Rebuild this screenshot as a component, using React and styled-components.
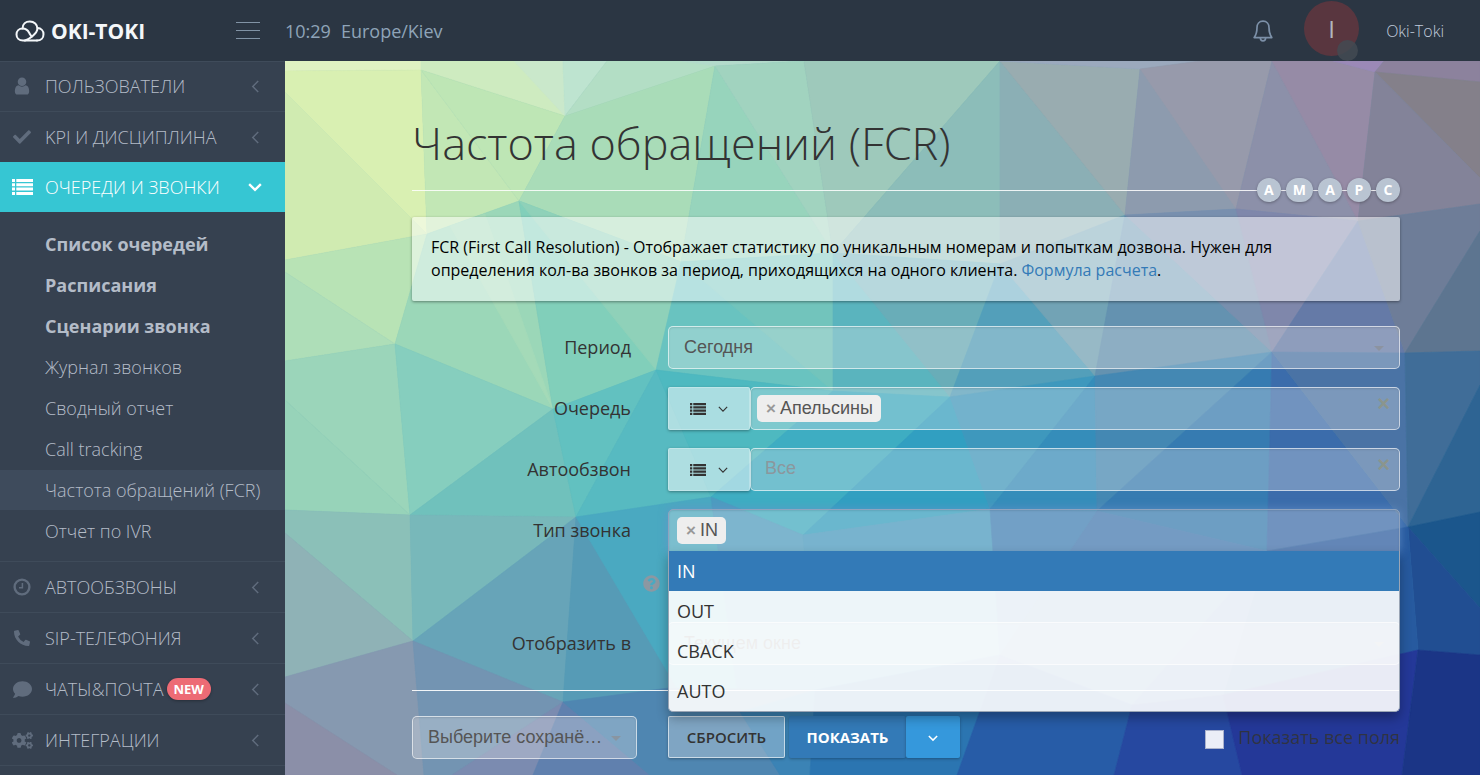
import React from 'react'
import styled, { createGlobalStyle } from 'styled-components'
import { FaCheck, FaPhoneAlt, FaComment, FaCogs, FaQuestionCircle } from 'react-icons/fa'

const GlobalStyle = createGlobalStyle`
  * {
    box-sizing: border-box;
  }
  body {
    margin: 0;
    background: #364150;
    font-family: "Open Sans", sans-serif;
    font-size: 18px;
    color: #333;
  }
  button, input, select {
    font: inherit;
    color: inherit;
  }
`

const Shell = styled.div`
  display: flex;
  flex-direction: column;
  height: 100vh;
  overflow: hidden;
`

const TopBar = styled.header`
  display: flex;
  align-items: center;
  flex: none;
  height: 61px;
  background: #2b3643;
`

const BrandArea = styled.div`
  display: flex;
  align-items: center;
  justify-content: space-between;
  width: 285px;
  padding: 0 25px 0 15px;
`

const Brand = styled.a`
  display: flex;
  align-items: center;
  gap: 6px;
  color: #f4f7f9;
  font-size: 21px;
  font-weight: 700;
  text-decoration: none;
`

const MenuToggle = styled.button`
  display: flex;
  flex-direction: column;
  gap: 7px;
  width: 24px;
  padding: 0;
  border: 0;
  background: none;
  span {
    height: 1px;
    background: #8193a5;
  }
`

const Clock = styled.div`
  display: flex;
  gap: 10px;
  flex: 1;
  color: #8fa4b8;
`

const BellButton = styled.button`
  display: flex;
  padding: 0;
  border: 0;
  background: none;
  color: #7c90a8;
`

const Avatar = styled.div`
  position: relative;
  display: flex;
  align-items: center;
  justify-content: center;
  width: 55px;
  height: 55px;
  margin: 0 27px 4px 31px;
  border-radius: 50%;
  background: #59363f;
  color: #b3b6bd;
  font-size: 24px;
`

const StatusDot = styled.span`
  position: absolute;
  right: 1px;
  bottom: -5px;
  width: 21px;
  height: 21px;
  border-radius: 50%;
  background: rgba(67, 74, 82, 0.85);
`

const UserLink = styled.a`
  margin-right: 36px;
  color: #c0cbdb;
  font-size: 16px;
  font-weight: 300;
  text-decoration: none;
`

const Body = styled.div`
  display: flex;
  flex: 1;
  min-height: 0;
`

const Sidebar = styled.nav`
  flex: none;
  width: 285px;
  overflow: hidden;
  background: #364150;
  box-shadow: inset 0 1px #3f4b5a;
`

const MenuItem = styled.a`
  box-sizing: content-box;
  display: flex;
  align-items: center;
  height: 50px;
  padding: 0 23px 0 11px;
  border-top: ${props => props.$active ? '0' : '1px solid #3f4b5a'};
  background: ${props => props.$active ? '#36c6d3' : 'transparent'};
  color: ${props => props.$active ? '#fff' : '#b4bcc8'};
  font-weight: 300;
  text-decoration: none;
  &:first-child {
    border-top: 0;
  }
`

const MenuIcon = styled.span`
  display: flex;
  justify-content: center;
  width: 22px;
  margin-right: 12px;
  color: ${props => props.$active ? '#fff' : '#606c7d'};
`

const MenuLabel = styled.span`
  display: flex;
  align-items: center;
  gap: 3px;
  flex: 1;
`

const MenuArrow = styled.span`
  display: flex;
  color: ${props => props.$active ? '#fff' : '#606c7d'};
`

const NewBadge = styled.span`
  padding: 0 7px;
  border-radius: 11px;
  background: #ed6b75;
  color: #fff;
  font-size: 13px;
  font-weight: 700;
  line-height: 22px;
  box-shadow: 0 1px 3px rgba(0, 0, 0, 0.3);
`

const SubMenu = styled.div`
  display: flex;
  flex-direction: column;
  gap: 1px;
  padding: 12px 0 10px;
`

const SubLink = styled.a`
  padding-left: 45px;
  background: ${props => props.$selected ? '#3e4b5c' : 'transparent'};
  color: #b4bcc8;
  font-weight: ${props => props.$strong ? 700 : 300};
  line-height: 40px;
  text-decoration: none;
`

const Content = styled.main`
  position: relative;
  flex: 1;
  min-width: 0;
  overflow: hidden;
  background: #5a9fb8;
`

const Backdrop = styled.svg`
  position: absolute;
  top: 0;
  left: 0;
  width: 100%;
  height: 100%;
`

const Page = styled.div`
  position: relative;
  padding: 52px 80px 0 127px;
`

const Title = styled.h1`
  margin: 0;
  font-size: 45px;
  font-weight: 300;
  line-height: 60px;
`

const TagLine = styled.div`
  display: flex;
  justify-content: flex-end;
  gap: 5px;
  margin: 5px 0 15px;
  background: linear-gradient(rgba(255, 255, 255, 0.85), rgba(255, 255, 255, 0.85)) center / 100% 1px no-repeat;
`

const Tag = styled.button`
  min-width: 24px;
  height: 24px;
  padding: 0 7px;
  border: 0;
  border-radius: 12px;
  background: #b9c4d2;
  color: #fff;
  font-size: 14px;
  font-weight: 700;
  line-height: 24px;
  box-shadow: 0 1px 3px rgba(0, 0, 0, 0.3);
`

const Notice = styled.p`
  margin: 0 0 25px;
  padding: 19px 60px 19px 19px;
  border-radius: 2px;
  background: rgba(255, 255, 255, 0.52);
  color: #000;
  font-size: 16px;
  line-height: 23px;
  box-shadow: 0 1px 3px rgba(0, 0, 0, 0.4);
  a {
    color: #337ab7;
    text-decoration: none;
  }
`

const Row = styled.div`
  display: grid;
  grid-template-columns: 256px minmax(0, 1fr);
  margin-bottom: 18px;
`

const Label = styled.label`
  padding-right: 37px;
  line-height: 43px;
  text-align: right;
`

const HelpCell = styled.div`
  display: flex;
  justify-content: flex-end;
  height: 34px;
  padding: 5px 8px 0 0;
  color: #8c98a2;
`

const Group = styled.div`
  position: relative;
  display: flex;
  min-width: 0;
`

const Picker = styled.div`
  position: relative;
  flex: 1;
  display: flex;
  align-items: center;
  min-width: 0;
  height: 43px;
  padding-left: ${props => props.$tight ? '8px' : '6px'};
  border: 1px solid ${props => props.$open ? '#8fa3bf' : 'rgba(255, 255, 255, 0.6)'};
  border-radius: ${props => props.$open ? '5px 5px 0 0' : '5px'};
  background: rgba(238, 238, 238, 0.3);
  color: #555;
  font-family: "Liberation Sans", Arial, sans-serif;
  box-shadow: inset 0 1px 2px rgba(0, 0, 0, 0.1)${props => props.$open ? ', 0 0 10px rgba(102, 145, 200, 0.7)' : ''};
`

const NativeSelect = styled.select`
  width: 100%;
  height: 100%;
  padding: 0 28px 2px 9px;
  border: 0;
  background: transparent;
  appearance: none;
  text-overflow: ellipsis;
`

const Caret = styled.span`
  position: absolute;
  top: 19px;
  right: 15px;
  border: 5px solid transparent;
  border-top-color: #8c9199;
  border-bottom: 0;
  opacity: 0.8;
  pointer-events: none;
`

const QuietInput = styled.input`
  flex: 1;
  min-width: 0;
  height: 100%;
  padding: 0 8px 2px;
  border: 0;
  outline: 0;
  background: transparent;
  &::placeholder {
    color: #8b979d;
    opacity: 1;
  }
`

const Chip = styled.span`
  display: flex;
  align-items: center;
  gap: 4px;
  height: 27px;
  margin-bottom: 1px;
  padding: 0 8px 0 9px;
  border-radius: 5px;
  background: #eee;
  line-height: 27px;
`

const ChipRemove = styled.button`
  padding: 0;
  border: 0;
  background: none;
  color: #999;
  font-size: 17px;
  font-weight: 700;
`

const ClearButton = styled.button`
  align-self: flex-start;
  margin: 4px 9px 0 0;
  padding: 0;
  border: 0;
  background: none;
  color: rgba(150, 148, 110, 0.6);
  font-size: 22px;
  font-weight: 700;
  line-height: 24px;
`

const ListButton = styled.button`
  display: flex;
  align-items: center;
  justify-content: center;
  gap: 12px;
  width: 82px;
  padding: 0;
  border: 1px solid rgba(255, 255, 255, 0.25);
  border-radius: 2px;
  background: rgba(255, 255, 255, 0.52);
  box-shadow: 0 1px 3px rgba(0, 0, 0, 0.35);
`

const Options = styled.ul`
  position: absolute;
  z-index: 2;
  top: 42px;
  left: 0;
  right: 0;
  margin: 0;
  padding: 0;
  border: 1px solid #9aa5b5;
  border-top: 0;
  border-radius: 0 0 5px 5px;
  background: rgba(255, 255, 255, 0.9);
  list-style: none;
  box-shadow: 0 6px 12px rgba(0, 0, 0, 0.3);
`

const Option = styled.li`
  padding: 0 8px;
  background: ${props => props.$current ? '#337ab7' : 'transparent'};
  color: ${props => props.$current ? '#fff' : '#333'};
  line-height: 40px;
`

const Rule = styled.hr`
  height: 1px;
  margin: 25px 0;
  border: 0;
  background: rgba(255, 255, 255, 0.9);
`

const Footer = styled.div`
  display: grid;
  grid-template-columns: 256px auto 1fr;
`

const Saved = styled.div`
  display: flex;
  width: 225px;
`

const Actions = styled.div`
  display: flex;
  height: 42px;
`

const ActionButton = styled.button`
  width: ${props => props.$narrow ? '54px' : '117px'};
  padding: 0;
  border: ${props => props.$ghost ? '1px solid rgba(255, 255, 255, 0.6)' : '0'};
  border-radius: 2px;
  margin-right: ${props => props.$ghost ? '4px' : '0'};
  background: ${props => props.$ghost ? 'rgba(238, 238, 238, 0.3)' : props.$narrow ? '#3598dc' : '#337ab7'};
  color: ${props => props.$ghost ? '#333' : '#fff'};
  font-size: 15px;
  font-weight: ${props => props.$ghost ? 600 : 700};
  box-shadow: 0 1px 3px rgba(0, 0, 0, 0.3);
`

const ShowAll = styled.label`
  display: flex;
  align-items: center;
  justify-self: end;
  gap: 14px;
  height: 42px;
  color: rgba(51, 51, 51, 0.85);
`

const CheckBox = styled.input`
  width: 19px;
  height: 19px;
  margin: 4px 0 0;
  border: 1px solid #aab2cc;
  background: #ebeef7;
  appearance: none;
`

// low-poly background: colour, then the corners of the face
const FACES = [
  ['#e0f2c2', '285,61 421,61 421,70 285,71'],
  ['#d9f0b2', '285,71 421,70 427,234 285,92'],
  ['#d0ebb1', '285,92 427,234 285,260'],
  ['#ceebc0', '421,61 563,61 565,116 421,70'],
  ['#cae8cb', '514,61 563,61 565,116'],
  ['#bee4d0', '563,61 607,61 565,116'],
  ['#b3dec5', '607,61 720,61 715,66 565,116'],
  ['#b3dacb', '682,61 804,61 715,66'],
  ['#c2e7b5', '421,70 519,201 427,234'],
  ['#bee6b5', '421,70 565,116 519,201'],
  ['#a9dcb8', '565,116 715,66 681,262 519,201'],
  ['#97d4bc', '715,66 833,253 681,262'],
  ['#a1d3bf', '715,66 804,61 833,253'],
  ['#9ec9bb', '804,61 1000,61 833,253'],
  ['#8cbdb9', '1000,61 1000,264 833,253'],
  ['#8bafb5', '1000,61 1125,215 1000,264'],
  ['#99acb0', '1000,61 1140,69 1125,215'],
  ['#9ba9bd', '1000,61 1200,61 1140,69'],
  ['#8d9bae', '1140,69 1236,209 1125,215'],
  ['#979aab', '1140,69 1200,61 1272,61 1236,209'],
  ['#8c90a9', '1272,61 1358,221 1236,209'],
  ['#968ba6', '1272,61 1333,61 1375,72 1358,221'],
  ['#9b89b7', '1333,61 1384,61 1375,72'],
  ['#8c829d', '1384,61 1480,61 1480,82 1375,72'],
  ['#84808a', '1375,72 1480,82 1480,178'],
  ['#838399', '1375,72 1480,178 1480,204 1358,221'],
  ['#b8e3b5', '285,260 427,234 395,344 285,272'],
  ['#aedeb8', '285,272 395,344 285,361'],
  ['#9bd7b8', '427,234 519,201 553,409 395,344'],
  ['#a4dab8', '450,226 485,214 553,409'],
  ['#81cfba', '519,201 681,262 656,370 553,409'],
  ['#8fd1b9', '519,201 681,262 656,370'],
  ['#69c3c0', '681,262 833,253 833,391 656,370'],
  ['#72c4bc', '681,262 833,253 833,391'],
  ['#5ab4be', '833,253 1000,264 950,397 833,391'],
  ['#69adb8', '833,253 1000,264 950,397'],
  ['#539fba', '1000,264 1095,376 950,397'],
  ['#72a3b5', '1000,264 1125,215 1095,376'],
  ['#6492b0', '1125,215 1272,352 1095,376'],
  ['#788fae', '1125,215 1236,209 1272,352'],
  ['#7f87ab', '1236,209 1358,221 1272,352'],
  ['#657aa7', '1358,221 1405,353 1272,352'],
  ['#6e7d98', '1358,221 1480,204 1480,231 1405,353'],
  ['#5d7590', '1480,231 1480,351 1405,353'],
  ['#9bd5ba', '285,361 395,344 410,515 285,400'],
  ['#97d3b9', '285,400 410,515 285,510'],
  ['#86cebe', '395,344 553,409 410,515'],
  ['#70c1bc', '553,409 576,517 410,515'],
  ['#62c1c0', '553,409 656,370 576,517'],
  ['#57bac1', '656,370 711,497 576,517'],
  ['#4eb9c0', '656,370 833,391 711,497'],
  ['#3eadc2', '833,391 950,397 803,535 711,497'],
  ['#319fc1', '950,397 990,509 803,535'],
  ['#3e98bd', '950,397 1095,376 990,509'],
  ['#358dba', '1095,376 1097,511 990,509'],
  ['#4488b3', '1095,376 1272,352 1097,511'],
  ['#367bb1', '1272,352 1267,551 1097,511'],
  ['#3b6cab', '1272,352 1408,527 1267,551'],
  ['#4a73a5', '1272,352 1405,353 1408,527'],
  ['#406d98', '1405,353 1480,351 1480,385 1408,527'],
  ['#2e6493', '1480,385 1480,512 1408,527'],
  ['#1b568c', '1408,527 1480,512 1480,608'],
  ['#214e92', '1408,527 1480,608 1480,655 1418,650'],
  ['#275a9f', '1408,527 1418,650 1223,695 1267,551'],
  ['#8bc0b8', '285,510 410,515 413,641 285,533'],
  ['#8fb2b6', '285,533 413,641 285,677'],
  ['#78b8ba', '410,515 576,517 413,641'],
  ['#67a4b8', '576,517 563,702 413,641'],
  ['#569bb6', '576,517 684,700 563,702'],
  ['#4aa9c1', '576,517 711,497 740,712 684,700'],
  ['#4c9cc0', '711,497 803,535 815,690 740,712'],
  ['#459ac0', '803,535 990,509 1000,655 815,690'],
  ['#3d7fb5', '990,509 1097,511 1000,655'],
  ['#3f77b0', '1097,511 1267,551 1132,705 1000,655'],
  ['#3a69a9', '1267,551 1223,695 1132,705'],
  ['#8699b0', '285,677 413,641 424,775 397,775 285,703'],
  ['#8b8fa8', '285,703 397,775 285,775'],
  ['#7394b2', '413,641 563,702 452,775 424,775'],
  ['#7b8bb0', '563,702 533,775 452,775'],
  ['#6080ae', '563,702 650,775 533,775'],
  ['#4f86b1', '563,702 668,688 815,690 810,775 650,775'],
  ['#3b83b5', '740,712 815,690 810,775 780,775'],
  ['#2b75b1', '815,690 1000,655 957,775 810,775'],
  ['#275ca7', '1000,655 1132,705 1114,775 957,775'],
  ['#2648a0', '1132,705 1223,695 1242,775 1114,775'],
  ['#243898', '1223,695 1418,650 1402,775 1242,775'],
  ['#1b3586', '1418,650 1480,655 1480,775 1402,775']
]

const Mesh = () => <Backdrop viewBox="285 61 1195 714" preserveAspectRatio="xMidYMin slice" aria-hidden="true">
  {FACES.map(([color, points]) => <polygon key={points} points={points} fill={color} stroke={color} strokeWidth="0.6" />)}
</Backdrop>

const CloudLogo = () => <svg width="30" height="22" viewBox="0 0 30 22" fill="none" stroke="#f4f7f9" strokeWidth="2" strokeLinecap="round">
  <path d="M22 20.5H8C4 20.5 1.5 17.800 1.5 14.400C1.5 11 4 8.400 7.600 8.400C10.500 8.400 12.600 9.600 14 12.500C15.200 15 16.400 16.200 16.800 16.600" />
  <path d="M7.600 8.400C7.600 4 10.800 1.500 14.800 1.500C19.200 1.500 22.400 4.600 22.400 8.600C22.400 12.600 19.200 14.600 16.600 16.800C14.600 18.600 13 20 10 20.500" />
  <path d="M22.600 8C26 8.200 28.500 10.600 28.500 14.200C28.500 18 26 20.500 22 20.500" />
</svg>

const BellIcon = () => <svg width="20" height="22" viewBox="0 0 20 22" fill="none" stroke="currentColor" strokeWidth="1.7" strokeLinejoin="round">
  <path d="M10 1.200C6.200 1.200 4 4 4 7.600C4 12.800 3.400 14.600 1.200 17.600H18.800C16.600 14.600 16 12.800 16 7.600C16 4 13.800 1.200 10 1.200Z" />
  <path d="M7.400 18C7.400 19.800 8.600 20.800 10 20.800C11.400 20.800 12.600 19.800 12.600 18" />
</svg>

const UserIcon = () => <svg width="20" height="20" viewBox="0 0 1792 1792" fill="currentColor">
  <path d="M1536 1399q0 109-62.500 187t-150.500 78h-854q-88 0-150.500-78t-62.500-187q0-85 8.500-160.500t31.500-152 58.500-131 94-89 134.500-34.500q131 128 313 128t313-128q76 0 134.500 34.500t94 89 58.500 131 31.500 152 8.500 160.500zm-256-887q0 159-112.500 271.500t-271.500 112.500-271.500-112.500-112.500-271.500 112.500-271.500 271.500-112.500 271.500 112.500 112.500 271.500z" />
</svg>

const ListIcon = ({ width = 16, height = 12 }) => <svg width={width} height={height} viewBox="0 0 21 16" preserveAspectRatio="none" fill="currentColor">
  {[0, 4.3, 8.6, 12.9].map(y => <path key={y} d={`M0 ${y}h3v3h-3z M4.300 ${y}h16.700v3h-16.700z`} />)}
</svg>

const ClockIcon = () => <svg width="18" height="18" viewBox="0 0 18 18" fill="none" stroke="currentColor">
  <circle cx="9" cy="9" r="7.4" strokeWidth="2.4" />
  <path d="M9.400 5V9.800H6" strokeWidth="1.5" />
</svg>

const Angle = ({ down, size = 12, weight = 1.6 }) => <svg width={size} height={size} viewBox="0 0 12 12" fill="none" stroke="currentColor" strokeWidth={weight}>
  <path d={down ? 'M1 3.500L6 8.500L11 3.500' : 'M8.500 1L3.500 6L8.500 11'} />
</svg>

const MENU_TOP = [
  { text: 'ПОЛЬЗОВАТЕЛИ', icon: <UserIcon /> },
  { text: 'KPI И ДИСЦИПЛИНА', icon: <FaCheck size={18} /> },
  { text: 'ОЧЕРЕДИ И ЗВОНКИ', icon: <ListIcon width={21} height={16} />, active: true }
]

const MENU_BOTTOM = [
  { text: 'АВТООБЗВОНЫ', icon: <ClockIcon /> },
  { text: 'SIP-ТЕЛЕФОНИЯ', icon: <FaPhoneAlt size={16} /> },
  { text: 'ЧАТЫ&ПОЧТА', icon: <FaComment size={19} />, badge: 'NEW' },
  { text: 'ИНТЕГРАЦИИ', icon: <FaCogs size={21} /> }
]

const SUB_MENU = [
  { text: 'Список очередей', strong: true },
  { text: 'Расписания', strong: true },
  { text: 'Сценарии звонка', strong: true },
  { text: 'Журнал звонков' },
  { text: 'Сводный отчет' },
  { text: 'Call tracking' },
  { text: 'Частота обращений (FCR)', selected: true },
  { text: 'Отчет по IVR' }
]

const renderMenuItem = item => <MenuItem key={item.text} href="#" $active={item.active}>
  <MenuIcon $active={item.active}>{item.icon}</MenuIcon>
  <MenuLabel>{item.text}{item.badge && <NewBadge>{item.badge}</NewBadge>}</MenuLabel>
  <MenuArrow $active={item.active}>
    <Angle down={item.active} size={item.active ? 14 : 13} weight={item.active ? 2 : 1.4} />
  </MenuArrow>
</MenuItem>

const SelectBox = ({ id, value, label }) => <Picker>
  <NativeSelect id={id} aria-label={label}>
    <option>{value}</option>
  </NativeSelect>
  <Caret />
</Picker>

const App = () => {
  const [callType, setCallType] = React.useState('IN')

  return <Shell>
    <GlobalStyle />
    <TopBar>
      <BrandArea>
        <Brand href="#"><CloudLogo />OKI-TOKI</Brand>
        <MenuToggle aria-label="Меню"><span /><span /><span /></MenuToggle>
      </BrandArea>
      <Clock><span>10:29</span><span>Europe/Kiev</span></Clock>
      <BellButton aria-label="Уведомления"><BellIcon /></BellButton>
      <Avatar>I<StatusDot /></Avatar>
      <UserLink href="#">Oki-Toki</UserLink>
    </TopBar>
    <Body>
      <Sidebar>
        {MENU_TOP.map(renderMenuItem)}
        <SubMenu>
          {SUB_MENU.map(item => <SubLink key={item.text} href="#" $strong={item.strong} $selected={item.selected}>{item.text}</SubLink>)}
        </SubMenu>
        {MENU_BOTTOM.map(renderMenuItem)}
        <MenuItem href="#" aria-label="Еще" />
      </Sidebar>
      <Content>
        <Mesh />
        <Page>
          <Title>Частота обращений (FCR)</Title>
          <TagLine>
            {['A', 'M', 'A', 'P', 'C'].map((letter, i) => <Tag key={i}>{letter}</Tag>)}
          </TagLine>
          <Notice>
            FCR (First Call Resolution) - Отображает статистику по уникальным номерам и попыткам дозвона. Нужен для определения кол-ва звонков за период, приходящихся на одного клиента. <a href="#">Формула расчета</a>.
          </Notice>
          <Row>
            <Label htmlFor="period">Период</Label>
            <Group><SelectBox id="period" value="Сегодня" /></Group>
          </Row>
          <Row>
            <Label htmlFor="queue">Очередь</Label>
            <Group>
              <ListButton aria-label="Список очередей"><ListIcon /><Angle down size={10} weight={1.4} /></ListButton>
              <Picker>
                <Chip><ChipRemove aria-label="Убрать">×</ChipRemove>Апельсины</Chip>
                <QuietInput id="queue" />
                <ClearButton aria-label="Очистить">×</ClearButton>
              </Picker>
            </Group>
          </Row>
          <Row>
            <Label htmlFor="autodial">Автообзвон</Label>
            <Group>
              <ListButton aria-label="Список автообзвонов"><ListIcon /><Angle down size={10} weight={1.4} /></ListButton>
              <Picker>
                <QuietInput id="autodial" placeholder="Все" />
                <ClearButton aria-label="Очистить">×</ClearButton>
              </Picker>
            </Group>
          </Row>
          <Row>
            <Label htmlFor="calltype">Тип звонка</Label>
            <Group>
              <Picker $tight $open>
                <Chip><ChipRemove aria-label="Убрать">×</ChipRemove>{callType}</Chip>
                <QuietInput id="calltype" />
              </Picker>
              <Options role="listbox" aria-label="Тип звонка">
                {['IN', 'OUT', 'CBACK', 'AUTO'].map(type => <Option
                  key={type}
                  role="option"
                  aria-selected={type === callType}
                  $current={type === callType}
                  onClick={() => setCallType(type)}
                >{type}</Option>)}
              </Options>
            </Group>
          </Row>
          <Row>
            <HelpCell><FaQuestionCircle size={17} /></HelpCell>
          </Row>
          <Row>
            <Label htmlFor="target">Отобразить в</Label>
            <Group><SelectBox id="target" value="Текущем окне" /></Group>
          </Row>
          <Rule />
          <Footer>
            <Saved><SelectBox label="Сохранённые" value="Выберите сохранё…" /></Saved>
            <Actions>
              <ActionButton $ghost>СБРОСИТЬ</ActionButton>
              <ActionButton>ПОКАЗАТЬ</ActionButton>
              <ActionButton $narrow aria-label="Еще действия"><Angle down size={10} weight={1.8} /></ActionButton>
            </Actions>
            <ShowAll><CheckBox type="checkbox" />Показать все поля</ShowAll>
          </Footer>
        </Page>
      </Content>
    </Body>
  </Shell>
}

export default App
